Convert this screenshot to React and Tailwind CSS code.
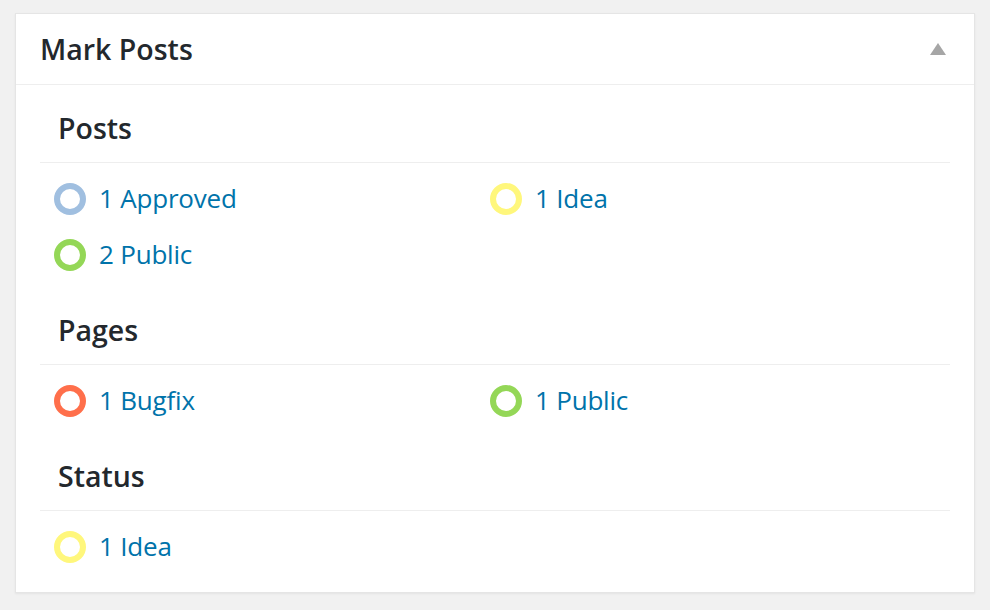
import React from "react";

const Ring = ({ color }) => (
  <span
    className="block h-[32px] w-[32px] shrink-0 rounded-full border-[6px] bg-white"
    style={{ borderColor: color }}
  />
);

const Item = ({ color, label }) => (
  <a href="#" className="flex h-[56px] items-center gap-[13px] text-[26px] leading-none tracking-[-0.2px] text-[#0073aa]">
    <Ring color={color} />
    <span className="-mt-[2px]">{label}</span>
  </a>
);

const Section = ({ title, items }) => (
  <div>
    <h3 className="pl-[18px] pt-[23px] pb-[14px] text-[28.5px] font-semibold leading-[40px] text-[#23282d]">
      {title}
    </h3>
    <div className="border-t border-[#eeeeee] pt-[8px] pb-[4px] pl-[14px]">
      <div className="grid grid-cols-[436px_1fr]">
        {items.map((it, i) => (
          <Item key={i} color={it.color} label={it.label} />
        ))}
      </div>
    </div>
  </div>
);

const BLUE = "#a0bfe0";
const YELLOW = "#fff77c";
const GREEN = "#94d757";
const ORANGE = "#ff6f4b";

export default function App() {
  return (
    <div
      className="h-[610px] w-[990px] overflow-hidden bg-[#f1f1f1] pl-[15px] pt-[13px]"
      style={{ fontFamily: '"Open Sans", "Noto Sans", sans-serif' }}
    >
      <div className="w-[960px] border border-[#e5e5e5] bg-white pb-[13px] shadow-[0_1px_2px_rgba(0,0,0,0.06)]">
        <div className="flex h-[71px] items-center justify-between border-b border-[#eeeeee] pl-[24px] pr-[28px]">
          <h2 className="text-[28.5px] font-semibold leading-none text-[#23282d]">Mark Posts</h2>
          <svg width="16" height="12" viewBox="0 0 16 12">
            <polygon points="8,0 16,12 0,12" fill="#a6a6a6" />
          </svg>
        </div>
        <div className="px-[24px]">
          <Section
            title="Posts"
            items={[
              { color: BLUE, label: "1 Approved" },
              { color: YELLOW, label: "1 Idea" },
              { color: GREEN, label: "2 Public" },
            ]}
          />
          <Section
            title="Pages"
            items={[
              { color: ORANGE, label: "1 Bugfix" },
              { color: GREEN, label: "1 Public" },
            ]}
          />
          <Section title="Status" items={[{ color: YELLOW, label: "1 Idea" }]} />
        </div>
      </div>
    </div>
  );
}
